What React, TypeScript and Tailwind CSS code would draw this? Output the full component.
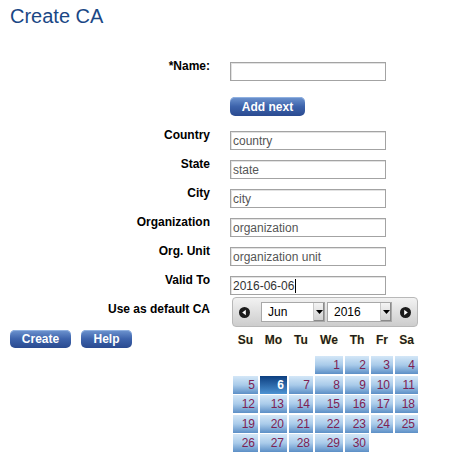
import React from "react";

const font = { fontFamily: '"Liberation Sans", Arial, sans-serif' };

const fields = [
  { label: "Country", value: "country" },
  { label: "State", value: "state" },
  { label: "City", value: "city" },
  { label: "Organization", value: "organization" },
  { label: "Org. Unit", value: "organization unit" },
];

function Label({ children }: { children: React.ReactNode }) {
  return (
    <div className="w-[210px] shrink-0 text-right text-[12px] font-bold leading-[14px] text-black -mt-[3px]">
      {children}
    </div>
  );
}

function TextInput({ value, caret }: { value?: string; caret?: boolean }) {
  return (
    <div className="ml-[20px] flex h-[19px] w-[156px] items-center border border-[#a3a3a3] bg-white px-[2px] text-[12px] text-[#555] shadow-[inset_1px_1px_0_#e2e2e2]">
      <span className={caret ? "text-[#333]" : ""}>{value}</span>
      {caret && <span className="ml-[1px] h-[14px] w-px bg-black" />}
    </div>
  );
}

function BlueButton({ children, className }: { children: React.ReactNode; className?: string }) {
  return (
    <div
      className={
        "flex items-center justify-center rounded-[5px] bg-gradient-to-b from-[#6f95d0] via-[#3d63ab] to-[#2a4a90] text-[12px] font-bold text-white shadow-[inset_0_1px_0_#8fb0e0] " +
        (className ?? "")
      }
    >
      {children}
    </div>
  );
}

function Arrow({ dir }: { dir: "left" | "right" }) {
  return (
    <svg width="11" height="11" viewBox="0 0 11 11">
      <circle cx="5.5" cy="5.5" r="5.5" fill="#1b1b1b" />
      {dir === "left" ? (
        <path d="M3.2 5.5 L6.8 2.8 L6.8 8.2 Z" fill="#fff" />
      ) : (
        <path d="M7.8 5.5 L4.2 2.8 L4.2 8.2 Z" fill="#fff" />
      )}
    </svg>
  );
}

function Select({ value, width }: { value: string; width: string }) {
  return (
    <div className={"flex h-[20px] items-stretch border border-[#a8a8a8] bg-white " + width}>
      <div className="flex flex-1 items-center pl-[6px] text-[12px] text-black">{value}</div>
      <div className="flex w-[11px] items-center justify-center border-l border-[#c8c8c8] bg-gradient-to-b from-[#f4f4f4] to-[#cfcfcf] shadow-[inset_-1px_-1px_0_#8a8a8a]">
        <svg width="7" height="4" viewBox="0 0 7 4">
          <path d="M0 0 L7 0 L3.5 4 Z" fill="#000" />
        </svg>
      </div>
    </div>
  );
}

const dayNames = ["Su", "Mo", "Tu", "We", "Th", "Fr", "Sa"];

function Calendar() {
  const cells: (number | null)[] = [null, null, null];
  for (let d = 1; d <= 30; d++) cells.push(d);

  return (
    <div className="absolute left-[232px] top-[297px] w-[186px]">
      {/* header */}
      <div className="flex h-[30px] items-center rounded-[4px] border border-[#b8b8b8] bg-gradient-to-b from-[#f2f2f2] to-[#cdcdcd] pl-[6px] pr-[6px]">
        <Arrow dir="left" />
        <div className="ml-[11px] flex gap-[2px]">
          <Select value="Jun" width="w-[64px]" />
          <Select value="2016" width="w-[65px]" />
        </div>
        <div className="ml-auto">
          <Arrow dir="right" />
        </div>
      </div>

      {/* day names */}
      <div className="grid h-[26px] grid-cols-[25px_27px_24px_28px_24px_22px_23px] items-center gap-x-[2px] pl-px">
        {dayNames.map((n) => (
          <div key={n} className="text-center text-[12px] font-bold text-[#1e1e1e] [text-shadow:0_0_1px_#f5d98a]">
            {n}
          </div>
        ))}
      </div>

      {/* days */}
      <div className="mt-[3px] grid grid-cols-[25px_27px_24px_28px_24px_22px_23px] auto-rows-[18px] gap-x-[2px] gap-y-[1.5px] pl-px">
        {cells.map((d, i) =>
          d === null ? (
            <div key={i} />
          ) : d === 6 ? (
            <div
              key={i}
              className="flex items-center justify-end bg-gradient-to-b from-[#0c3f80] to-[#4d93d3] pr-[3px] text-[12px] font-bold text-white"
            >
              {d}
            </div>
          ) : (
            <div
              key={i}
              className="flex items-center justify-end bg-gradient-to-b from-[#d4e7f7] via-[#a9cbea] to-[#5c8fc6] pr-[3px] text-[12px] text-[#7d2153]"
            >
              {d}
            </div>
          )
        )}
      </div>
    </div>
  );
}

export default function App() {
  return (
    <div className="relative h-[471px] w-[450px] overflow-hidden bg-white" style={font}>
      <div className="pl-[10px] pt-[4px] text-[20px] leading-[24px] text-[#1a4785]">Create CA</div>

      <div className="mt-[34px] flex flex-col">
        {/* Name */}
        <div className="flex items-start">
          <Label>*Name:</Label>
          <TextInput />
        </div>

        <div className="mt-[16px] pl-[230px]">
          <BlueButton className="h-[19px] w-[75px]">Add next</BlueButton>
        </div>

        <div className="mt-[15px] flex flex-col gap-[10px]">
          {fields.map((f) => (
            <div key={f.label} className="flex items-start">
              <Label>{f.label}</Label>
              <TextInput value={f.value} />
            </div>
          ))}
          <div className="flex items-start">
            <Label>Valid To</Label>
            <TextInput value="2016-06-06" caret />
          </div>
          <div className="flex h-[19px] items-start">
            <Label>Use as default CA</Label>
          </div>
        </div>

        <div className="mt-[6px] flex gap-[10px] pl-[10px]">
          <BlueButton className="h-[18px] w-[61px]">Create</BlueButton>
          <BlueButton className="h-[18px] w-[51px]">Help</BlueButton>
        </div>
      </div>

      <Calendar />
    </div>
  );
}
